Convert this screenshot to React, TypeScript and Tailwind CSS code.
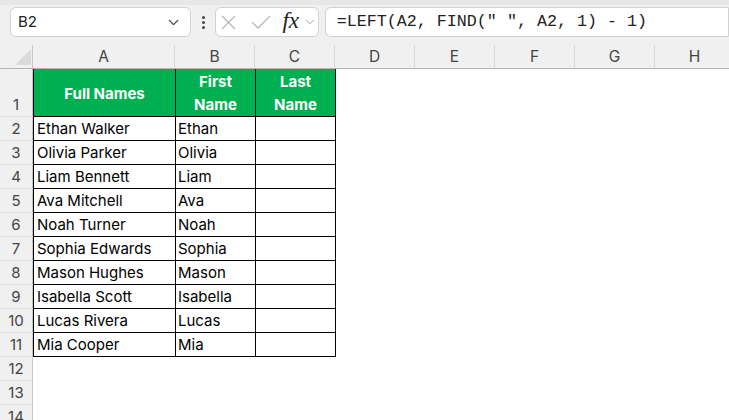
import { ChevronDown } from "lucide-react";

const rows = [
  ["Ethan Walker", "Ethan"],
  ["Olivia Parker", "Olivia"],
  ["Liam Bennett", "Liam"],
  ["Ava Mitchell", "Ava"],
  ["Noah Turner", "Noah"],
  ["Sophia Edwards", "Sophia"],
  ["Mason Hughes", "Mason"],
  ["Isabella Scott", "Isabella"],
  ["Lucas Rivera", "Lucas"],
  ["Mia Cooper", "Mia"],
];

const cols = ["A", "B", "C", "D", "E", "F", "G", "H"];

function RowHead({ n, tall }: { n: number; tall?: boolean }) {
  return (
    <div
      className={`w-[33px] shrink-0 bg-[#f0f0f0] border-r border-r-[#c6c6c6] border-b border-b-[#dedede] flex items-end justify-center text-[#444] text-[15px] leading-[22px] ${
        tall ? "h-[48px]" : "h-[24px]"
      }`}
    >
      {n}
    </div>
  );
}

export default function App() {
  return (
    <div
      className="w-[729px] h-[420px] overflow-hidden bg-white text-black"
      style={{ fontFamily: "Inter, 'Open Sans', sans-serif" }}
    >
      {/* Barre de formule */}
      <div className="h-[45px] bg-[#f0f0f0]">
        <div className="h-[5px] bg-[#e7e7e7]" />
        <div className="flex items-start pl-[10px] pt-[2px]">
          <div className="w-[188px] h-[30px] bg-white border border-[#d2d2d2] rounded-md flex items-center justify-between pl-[7px] pr-[8px]">
            <span className="text-[15px] text-[#222]">B2</span>
            <ChevronDown className="w-[17px] h-[17px] text-[#444]" strokeWidth={1.8} />
          </div>
          <div className="w-[25px] h-[30px] flex flex-col items-center justify-center gap-[2px]">
            <span className="w-[3px] h-[3px] bg-[#444] rounded-full" />
            <span className="w-[3px] h-[3px] bg-[#444] rounded-full" />
            <span className="w-[3px] h-[3px] bg-[#444] rounded-full" />
          </div>
          <div className="w-[107px] h-[30px] bg-white border border-[#d2d2d2] rounded-md flex items-center pl-[5px]">
            <svg width="15" height="15" viewBox="0 0 15 15" className="text-[#b8b8b8]">
              <path d="M1 1 L14 14 M14 1 L1 14" stroke="currentColor" strokeWidth="1.3" fill="none" />
            </svg>
            <svg width="20" height="14" viewBox="0 0 20 14" className="ml-[15px] text-[#b8b8b8]">
              <path d="M1 7 L7 13 L19 1" stroke="currentColor" strokeWidth="1.3" fill="none" />
            </svg>
            <span
              className="ml-[11px] text-[23px] italic text-[#222] leading-none -mt-[3px]"
              style={{ fontFamily: "'Liberation Serif', serif" }}
            >
              fx
            </span>
            <ChevronDown className="ml-[4px] w-[14px] h-[14px] text-[#999]" strokeWidth={1.6} />
          </div>
          <div className="ml-[6px] w-[420px] h-[30px] bg-white border border-[#d2d2d2] rounded-l-md flex items-center pl-[11px]">
            <span
              className="text-[16.7px] text-[#222] whitespace-pre"
              style={{ fontFamily: "'Liberation Mono', monospace" }}
            >
              {'=LEFT(A2, FIND(" ", A2, 1) - 1)'}
            </span>
          </div>
        </div>
      </div>

      {/* En-têtes de colonnes */}
      <div className="flex h-[24px] bg-[#f0f0f0] border-b border-b-[#b4b4b4]">
        <div className="w-[33px] shrink-0 border-r border-r-[#c6c6c6] relative">
          <svg width="20" height="20" viewBox="0 0 20 20" className="absolute left-[13px] top-[2px]">
            <path d="M18 2 L18 18 L2 18 Z" fill="#dadada" />
          </svg>
        </div>
        {cols.map((c) => (
          <div
            key={c}
            className={`${c === "A" ? "w-[142px]" : "w-[80px]"} shrink-0 border-r border-r-[#d6d6d6] flex items-center justify-center text-[15.5px] text-[#444]`}
          >
            {c}
          </div>
        ))}
      </div>

      {/* Ligne 1 : en-tête du tableau */}
      <div className="flex">
        <RowHead n={1} tall />
        <div className="w-[143px] shrink-0 h-[48px] bg-[#00b050] border-l border-r border-b border-black flex items-center justify-center pt-[3px] text-white font-bold text-[15px]">
          Full Names
        </div>
        <div className="w-[80px] shrink-0 h-[48px] bg-[#00b050] border-r border-b border-black flex flex-col items-center justify-center text-white font-bold text-[15px] leading-[23px]">
          <span>First</span>
          <span>Name</span>
        </div>
        <div className="w-[80px] shrink-0 h-[48px] bg-[#00b050] border-r border-b border-black flex flex-col items-center justify-center text-white font-bold text-[15px] leading-[23px]">
          <span>Last</span>
          <span>Name</span>
        </div>
      </div>

      {/* Lignes de données */}
      {rows.map(([full, first], i) => (
        <div key={full} className="flex">
          <RowHead n={i + 2} />
          <div className="w-[143px] shrink-0 h-[24px] border-l border-r border-b border-black flex items-end pl-[3px] text-[15px] leading-[22px]">
            {full}
          </div>
          <div className="w-[80px] shrink-0 h-[24px] border-r border-b border-black flex items-end pl-[2px] text-[15px] leading-[22px]">
            {first}
          </div>
          <div className="w-[80px] shrink-0 h-[24px] border-r border-b border-black" />
        </div>
      ))}

      {/* Lignes vides */}
      {[12, 13, 14].map((n) => (
        <div key={n} className="flex">
          <RowHead n={n} />
        </div>
      ))}
    </div>
  );
}
